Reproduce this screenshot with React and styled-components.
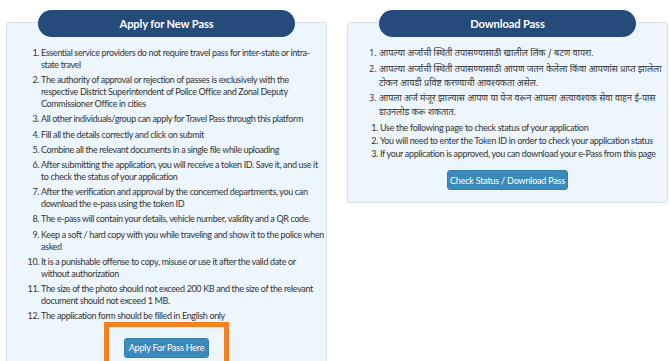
import React from 'react';
import styled, {createGlobalStyle} from 'styled-components';

const GlobalStyle = createGlobalStyle`
    body {
        margin: 0;
        background: #ffffff;
        font-family: Lato, "Open Sans", sans-serif;
        color: #333333;
    }
`

const applySteps = [
    "Essential service providers do not require travel pass for inter-state or intra-state travel",
    "The authority of approval or rejection of passes is exclusively with the respective District Superintendent of Police Office and Zonal Deputy Commissioner Office in cities",
    "All other individuals/group can apply for Travel Pass through this platform",
    "Fill all the details correctly and click on submit",
    "Combine all the relevant documents in a single file while uploading",
    "After submitting the application, you will receive a token ID. Save it, and use it to check the status of your application",
    "After the verification and approval by the concerned departments, you can download the e-pass using the token ID",
    "The e-pass will contain your details, vehicle number, validity and a QR code.",
    "Keep a soft / hard copy with you while traveling and show it to the police when asked",
    "It is a punishable offense to copy, misuse or use it after the valid date or without authorization",
    "The size of the photo should not exceed 200 KB and the size of the relevant document should not exceed 1 MB.",
    "The application form should be filled in English only",
]

const marathiSteps = [
    "आपल्या अर्जाची स्थिती तपासण्यासाठी खालील लिंक / बटण वापरा.",
    "आपल्या अर्जाची स्थिती तपासण्यासाठी आपण जतन केलेला किंवा आपणांस प्राप्त झालेला टोकन आयडी प्रविष्ट करण्याची आवश्यकता असेल.",
    "आपला अर्ज मंजूर झाल्यास आपण या पेज वरून आपला अत्यावश्यक सेवा वाहन ई-पास डाउनलोड करू शकतात.",
]

const downloadSteps = [
    "Use the following page to check status of your application",
    "You will need to enter the Token ID in order to check your application status",
    "If your application is approved, you can download your e-Pass from this page",
]

const App = () => {
    return (
        <Page>
            <GlobalStyle/>
            <Panel>
                <Pill>Apply for New Pass</Pill>
                <Steps $left={26} $right={1} $gap={3.2} $tracking={-0.355}>
                    {applySteps.map((step, index) => <li key={index}>{step}</li>)}
                </Steps>
                <Highlight>
                    <ActionButton $width={85}>Apply For Pass Here</ActionButton>
                </Highlight>
            </Panel>
            <Panel $short>
                <Pill>Download Pass</Pill>
                <Steps $left={23} $right={2} $gap={1.5} $top={10} $lineHeight={14} $marathi>
                    {marathiSteps.map((step, index) => <li key={index}>{step}</li>)}
                </Steps>
                <Steps $left={24} $right={4} $gap={0} $top={2} $lineHeight={12.8}>
                    {downloadSteps.map((step, index) => <li key={index}>{step}</li>)}
                </Steps>
                <ButtonRow>
                    <ActionButton $width={121}>Check Status / Download Pass</ActionButton>
                </ButtonRow>
            </Panel>
        </Page>
    )
}
export default App;

const Page = styled.div`
    display: flex;
    align-items: flex-start;
    gap: 20px;
    padding-left: 6px;
    height: 361px;
    overflow: hidden;
`
const Panel = styled.div`
    box-sizing: border-box;
    width: 321px;
    margin-top: 22px;
    background: #eef6fd;
    border: 1px solid #d6dfe8;
    border-radius: 3px;
    padding-bottom: ${props => props.$short ? '12px' : '40px'};
`
const Pill = styled.div`
    width: 257px;
    height: 27px;
    margin: -13px auto 0;
    border-radius: 14px;
    background: #244b79;
    color: #ffffff;
    font-size: 11.2px;
    font-weight: 700;
    letter-spacing: -0.15px;
    display: flex;
    align-items: center;
    justify-content: center;
`
const Steps = styled.ol`
    margin: ${props => props.$top ?? 10}px 0 0;
    padding: 0 ${props => props.$right}px 0 ${props => props.$left + 8}px;
    font-size: 9px;
    letter-spacing: ${props => props.$marathi ? 0 : (props.$tracking ?? -0.33)}px;
    line-height: ${props => props.$lineHeight ?? 12}px;
    color: #333333;
    font-family: ${props => props.$marathi
        ? '"Noto Sans Devanagari", "Lohit Devanagari", "Noto Sans", sans-serif'
        : 'Lato, "Open Sans", sans-serif'};

    li {
        margin-bottom: ${props => props.$gap}px;
    }
    li:last-child {
        margin-bottom: 0;
    }
`
const Highlight = styled.div`
    width: 125px;
    box-sizing: border-box;
    margin: 0 auto;
    border: 5px solid #f5821f;
    padding: 8px 15px 10px;
`
const ButtonRow = styled.div`
    display: flex;
    justify-content: center;
    margin-top: 10px;
`
const ActionButton = styled.button`
    width: ${props => props.$width}px;
    height: 20px;
    padding: 0;
    border: 1px solid #3580b0;
    border-radius: 3px;
    background: #3b8abc;
    color: #ffffff;
    font-family: Lato, "Open Sans", sans-serif;
    font-size: 9px;
    letter-spacing: -0.2px;
    white-space: nowrap;
    cursor: pointer;
`
